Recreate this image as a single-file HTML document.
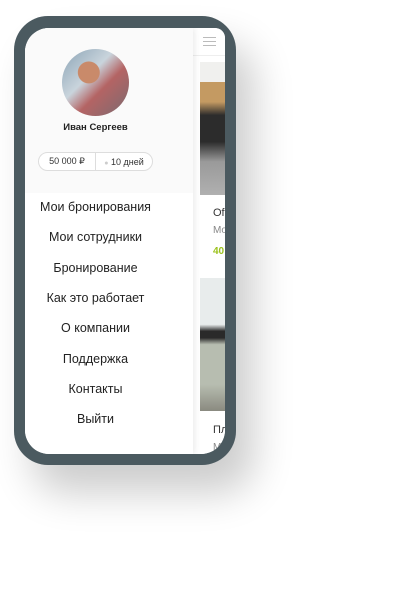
<!DOCTYPE html>
<html><head><meta charset="utf-8"><style>
*{margin:0;padding:0;box-sizing:border-box}
body{width:400px;height:600px;background:#fff;position:relative;overflow:hidden;font-family:"Liberation Sans",sans-serif}
.phone{position:absolute;left:14px;top:16px;width:222px;height:449px;border-radius:34px;background:#4b5a60;box-shadow:18px 28px 40px rgba(0,0,0,.2)}
.screen{position:absolute;left:11px;top:12px;width:200px;height:426px;border-radius:24px 10px 24px 24px;background:#fff;overflow:hidden}
.side{position:absolute;left:0;top:0;width:168px;height:100%;background:#fff;box-shadow:2px 0 6px rgba(0,0,0,.08);z-index:2}
.prof{height:165px;background:#fafafa}
.av{position:absolute;left:37px;top:21px;width:67px;height:67px;border-radius:50%;background:radial-gradient(circle at 40% 35%,#c98a6a 0 18%,transparent 19%),linear-gradient(135deg,#8aa3b5,#c9d4dc 40%,#b46464 60%,#7a6a70);}
.name{position:absolute;left:0;width:141px;top:94px;text-align:center;font-size:9.5px;font-weight:bold;color:#222}
.pill{position:absolute;left:13px;top:124px;width:115px;height:19px;border:1px solid #ddd;border-radius:10px;font-size:9px;color:#333;display:flex;align-items:center;background:#fff}
.pill span{flex:1;text-align:center}
.pill .sep{flex:none;width:1px;height:100%;background:#ddd}
.menu div{position:absolute;left:0;width:141px;text-align:center;font-size:12.5px;color:#222}
.right{position:absolute;left:168px;top:0;width:32px;height:100%;background:#fff}
.ham{position:absolute;left:10px;top:9px;width:13px;height:9px;border-top:1px solid #bbb;border-bottom:1px solid #bbb}
.ham:after{content:"";position:absolute;left:0;top:3px;width:13px;border-top:1px solid #bbb}
.div{position:absolute;left:0;top:27px;width:32px;border-top:1px solid #eee}
.img1{position:absolute;left:7px;top:34px;width:30px;height:133px;background:linear-gradient(180deg,#f0f0ee 0 15%,#c49a62 15% 30%,#2c2c2c 40% 60%,#9a9a9a 75%,#b0b0b0)}
.img2{position:absolute;left:7px;top:250px;width:30px;height:133px;background:linear-gradient(180deg,#e8ecec 0 35%,#2a2a2a 40% 45%,#b7bdb0 50% 80%,#8a8a80)}
.t{position:absolute;left:20px;font-size:10px;color:#333}
</style></head><body>
<div class="phone"><div class="screen">
<div class="side">
<div class="prof"></div>
<div class="av"></div>
<div class="name">Иван Сергеев</div>
<div class="pill"><span>50 000 ₽</span><i class="sep"></i><span><b style="color:#ccc;font-size:7px">●</b> 10 дней</span></div>
<div class="menu">
<div style="top:172px">Мои бронирования</div>
<div style="top:202px">Мои сотрудники</div>
<div style="top:233px">Бронирование</div>
<div style="top:263px">Как это работает</div>
<div style="top:293px">О компании</div>
<div style="top:324px">Поддержка</div>
<div style="top:354px">Контакты</div>
<div style="top:384px">Выйти</div>
</div>
</div>
<div class="right">
<div class="ham"></div><div class="div"></div>
<div class="img1"></div>
<div class="t" style="left:20px;top:179px;font-size:11px">Of</div>
<div class="t" style="left:20px;top:197px;color:#888">Mo</div>
<div class="t" style="left:20px;top:218px;color:#9bc21c;font-weight:bold">40</div>
<div class="img2"></div>
<div class="t" style="left:20px;top:396px;font-size:11px">Пл</div>
<div class="t" style="left:20px;top:414px;color:#888">М</div>
</div>
</div></div>
</body></html>
